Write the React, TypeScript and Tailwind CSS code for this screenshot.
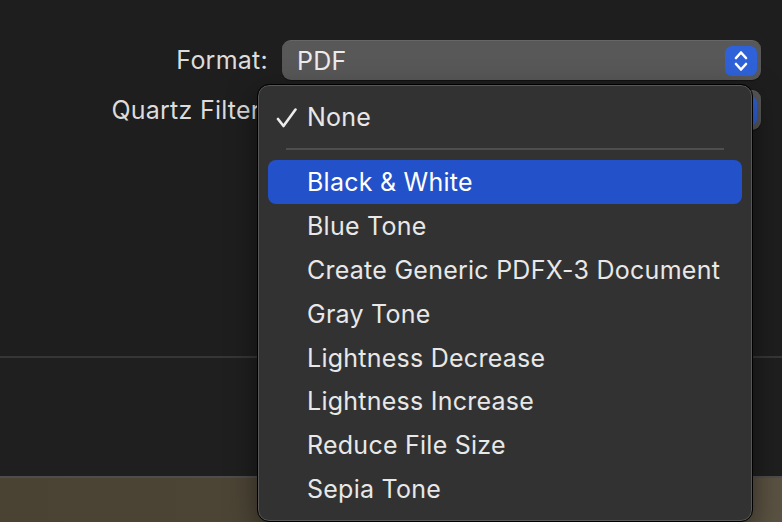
import React from "react";

const items = [
  "Blue Tone",
  "Create Generic PDFX-3 Document",
  "Gray Tone",
  "Lightness Decrease",
  "Lightness Increase",
  "Reduce File Size",
  "Sepia Tone",
];

function Stepper() {
  return (
    <div className="w-[32px] h-[30px] rounded-[7px] bg-[#2f62d8] flex items-center justify-center">
      <svg width="32" height="30" viewBox="0 0 32 30" fill="none">
        <polyline points="11,12 16,6.5 21,12" stroke="white" strokeWidth="2.6" strokeLinecap="round" strokeLinejoin="round" />
        <polyline points="11,18 16,23.5 21,18" stroke="white" strokeWidth="2.6" strokeLinecap="round" strokeLinejoin="round" />
      </svg>
    </div>
  );
}

function Popup({ value }: { value: string }) {
  return (
    <div className="h-[40px] rounded-[9px] bg-[#585858] border-t border-[#666] flex items-center justify-between pl-[15px] pr-[4px] shadow-[0_1px_1px_rgba(0,0,0,0.4)]">
      <span className="text-[25px] tracking-[0.25px] text-[#ececec] leading-none pt-[1px]">{value}</span>
      <Stepper />
    </div>
  );
}

export default function App() {
  return (
    <div
      className="relative w-[782px] h-[522px] overflow-hidden bg-[#1e1e1e] flex flex-col"
      style={{ fontFamily: "Inter, 'Noto Sans', sans-serif" }}
    >
      <div className="h-[356px] pt-[40px]">
        <div className="grid grid-cols-[268px_479px] gap-x-[14px] gap-y-[10px]">
          <div className="h-[40px] flex items-center justify-end text-[25px] tracking-[0.25px] text-[#dcdcdc] pt-[1px]">Format:</div>
          <Popup value="PDF" />
          <div className="h-[40px] flex items-center justify-end text-[25px] tracking-[0.25px] text-[#dcdcdc] pt-[1px]">Quartz Filter:</div>
          <Popup value="" />
        </div>
      </div>
      <div className="h-[2px] bg-[#363636]" />
      <div className="h-[118px] bg-[#1f1f1f]" />
      <div className="h-[2px] bg-[#4d4d4d]" />
      <div className="flex-1 bg-gradient-to-r from-[#4a4334] via-[#4d4637] to-[#5a5242]" />

      {/* Menu */}
      <div className="absolute left-[258px] top-[85px] w-[494px] h-[436px] rounded-[11px] bg-[#323232] border border-[#575757] outline outline-1 outline-black shadow-[0_10px_30px_rgba(0,0,0,0.5)] px-[9px] py-[9px] flex flex-col text-[25px] tracking-[0.25px] text-[#e8e8e8]">
        <div className="h-[44px] flex items-center relative">
          <svg className="absolute left-[8px] top-[13px]" width="22" height="20" viewBox="0 0 22 20" fill="none">
            <path d="M2 11 L7.5 18 L19.5 1.5" stroke="#ececec" strokeWidth="2.6" strokeLinecap="round" strokeLinejoin="round" />
          </svg>
          <span className="pl-[39px] pt-[2px]">None</span>
        </div>
        <div className="h-[21px] flex items-center px-[18px]">
          <div className="h-[2px] w-full bg-[#4e4e4e]" />
        </div>
        <div className="h-[44px] flex items-center rounded-[8px] bg-[#2351c9] text-white">
          <span className="pl-[39px] pt-[2px]">Black &amp; White</span>
        </div>
        {items.map((t) => (
          <div key={t} className="h-[44px] flex items-center">
            <span className="pl-[39px] pt-[2px]">{t}</span>
          </div>
        ))}
      </div>
    </div>
  );
}
